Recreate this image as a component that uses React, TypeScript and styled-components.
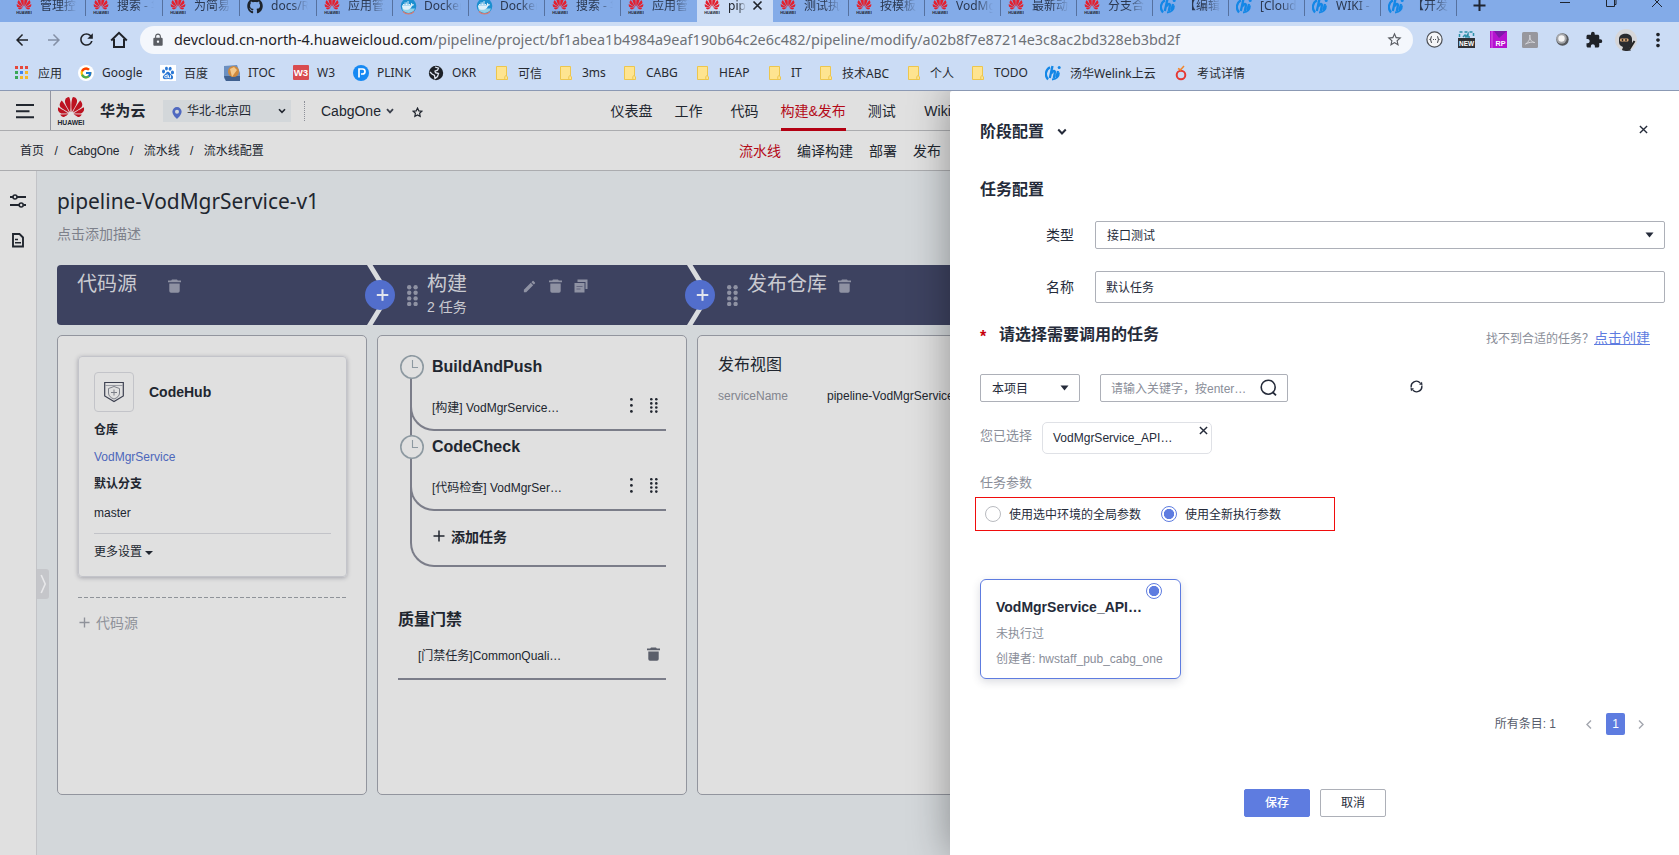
import React from "react";
import styled, { createGlobalStyle } from "styled-components";
import { SiHuawei, SiBaidu, SiDocker } from "react-icons/si";
import { FaGithub } from "react-icons/fa";
import { FcGoogle } from "react-icons/fc";
import { MdArrowBack, MdArrowForward, MdRefresh, MdLock, MdStarBorder, MdExtension, MdMoreVert, MdEdit } from "react-icons/md";

const UI = `"Liberation Sans", "Noto Sans CJK SC", sans-serif`;
const CHROME = `"Noto Sans", "Noto Sans CJK SC", sans-serif`;

const Global = createGlobalStyle`
  * { box-sizing: border-box; }
  html, body { margin: 0; padding: 0; overflow: hidden; }
  body { font-family: ${UI}; font-size: 12px; color: #21262f; }
  svg { display: block; flex: none; }
`;

const Window = styled.div`
  width: 1679px;
  height: 855px;
  display: flex;
  flex-direction: column;
  overflow: hidden;
`;

/* ---------- browser frame ---------- */

const TabStrip = styled.div`
  height: 22px;
  flex: none;
  display: flex;
  padding-left: 9px;
  background: #83abe8;
  overflow: hidden;
  font-family: ${CHROME};
  color: #2b3850;
`;

const Tab = styled.div<{ $w: number; $active?: boolean; $bare?: boolean }>`
  width: ${(p) => p.$w}px;
  flex: none;
  display: flex;
  height: ${(p) => (p.$active ? 22 : 16)}px;
  padding-left: 7px;
  background: ${(p) => (p.$active ? "#cbdcf5" : "transparent")};
  border-right: 1px solid ${(p) => (p.$active || p.$bare ? "transparent" : "#56719f")};
  color: ${(p) => (p.$active ? "#20242c" : "inherit")};
`;

const TabIcon = styled.div`
  width: 16px;
  height: 16px;
  flex: none;
  margin-top: -2px;
  margin-right: 8px;
`;

const TabText = styled.div<{ $w: number }>`
  width: ${(p) => p.$w}px;
  height: 18px;
  margin-top: -3px;
  line-height: 18px;
  overflow: hidden;
  white-space: nowrap;
  mask-image: linear-gradient(to right, #000 55%, transparent 100%);
`;

const WindowButtons = styled.div`
  display: flex;
  flex: 1;
`;

const Toolbar = styled.div`
  height: 37px;
  flex: none;
  display: flex;
  align-items: center;
  background: #cbdcf5;
  padding: 0 4px 3px 13px;
  color: #1f2228;
`;

const NavIcons = styled.div`
  width: 127px;
  display: flex;
  align-items: center;
  gap: 14px;
  flex: none;
  margin-left: -2px;
  padding: 1px 0 0 2px;
`;

const AddressBar = styled.div`
  width: 1273px;
  height: 28px;
  margin-top: 1px;
  display: flex;
  align-items: center;
  flex: none;
  margin-left: 2px;
  border-radius: 14px;
  background: #f4f7fc;
  padding: 0 10px 0 11px;
  color: #5a5d63;
`;

const Url = styled.div`
  flex: 1;
  margin-left: 9px;
  font: 14.4px/28px ${CHROME};
  color: #6d7177;
  white-space: nowrap;
  b { font-weight: 400; color: #1f2228; }
`;

const Extensions = styled.div`
  display: grid;
  grid-template-columns: repeat(8, 32px);
  align-items: center;
  justify-items: center;
  margin: 1px 0 0 5px;
`;

const Bookmarks = styled.div`
  height: 31px;
  flex: none;
  display: flex;
  padding: 0 0 4px 14px;
  background: #cbdcf5;
  font-family: ${CHROME};
  color: #272a31;
`;

const Bookmark = styled.div<{ $w: number }>`
  width: ${(p) => p.$w}px;
  flex: none;
  display: flex;
  align-items: center;
  gap: 8px;
  white-space: nowrap;
`;

/* ---------- site header ---------- */

const Site = styled.div`
  flex: 1;
  min-height: 0;
  position: relative;
  overflow: hidden;
  border-top: 1px solid #8b99b4;
  background: #e0e0e0;
  display: flex;
  flex-direction: column;
`;

const Header = styled.header`
  height: 40px;
  flex: none;
  display: flex;
  border-bottom: 1px solid #abacaf;
`;

const MenuButton = styled.div`
  width: 51px;
  height: 39px;
  border-right: 1px solid #9395a0;
  padding: 13px 0 0 16px;
`;

const Brand = styled.div`
  width: 112px;
  display: flex;
  align-items: center;
  padding-left: 6px;
  font-size: 15px;
  font-weight: 600;
  line-height: 36px;
`;

const BrandName = styled.span`
  margin-left: 15px;
  letter-spacing: 0.3px;
  padding-top: 1px;
`;

const Region = styled.div`
  width: 128px;
  height: 22px;
  margin-top: 9px;
  display: flex;
  align-items: center;
  padding: 0 5px 0 9px;
  background: #d3d7da;
  svg:first-child { margin: 4px 5px 0 0; }
  span { flex: 1; line-height: 22px; }
`;

const ProjectPick = styled.div`
  height: 20px;
  width: 298px;
  margin: 10px 0 0 13px;
  padding-left: 16px;
  border-left: 1px dotted #8d8f98;
  display: flex;
  align-items: center;
  font-size: 14px;
  svg { margin-left: 5px; }
  svg + svg { margin: 3px 0 0 18px; }
`;

const MainNav = styled.nav<{ $sub?: boolean }>`
  display: flex;
  font-size: 14px;
  gap: ${(p) => (p.$sub ? 16 : 22)}px;
  line-height: ${(p) => (p.$sub ? 40 : 41)}px;
`;

const NavItem = styled.a<{ $active?: boolean; $line?: boolean; $ml?: number }>`
  height: 40px;
  color: ${(p) => (p.$active ? "#b40a18" : "inherit")};
  margin-left: ${(p) => p.$ml ?? 0}px;
  border-bottom: ${(p) => (p.$line ? "3px solid #b30012" : "0")};
  white-space: nowrap;
`;

const SubHeader = styled.div`
  height: 40px;
  flex: none;
  display: flex;
  border-bottom: 1px solid #abacaf;
`;

const Crumbs = styled.div`
  width: 739px;
  padding-left: 20px;
  display: flex;
  gap: 10.4px;
  line-height: 40px;
  i { font-style: normal; }
`;

/* ---------- workspace ---------- */

const Work = styled.div`
  flex: 1;
  min-height: 0;
  display: flex;
`;

const Rail = styled.aside`
  width: 37px;
  flex: none;
  border-right: 1px solid #c2c3c7;
  padding: 22px 0 0 10px;
  display: flex;
  flex-direction: column;
  gap: 23px;
`;

const Canvas = styled.main`
  flex: 1;
  background: #d3d7da;
  display: flex;
  overflow: hidden;
`;

const RailHandle = styled.div`
  width: 12px;
  height: 30px;
  margin: 398px 8px 0 0;
  flex: none;
  background: #c5c6ca;
  border-radius: 0 3px 3px 0;
  padding: 5px 0 0 3px;
`;

const Board = styled.div`
  width: 1000px;
  flex: none;
  display: flex;
  flex-direction: column;
`;

const PipelineTitle = styled.h1`
  margin: 14px 0 0;
  font: 400 20.9px/32px ${CHROME};
`;

const Description = styled.div`
  margin-top: 6px;
  font-size: 14px;
  line-height: 22px;
  color: #7d808a;
`;

const StageBar = styled.div`
  display: flex;
  height: 60px;
  margin-top: 20px;
  flex: none;
  border-radius: 4px 0 0 4px;
  background: #3d4260;
  color: #cfd0d6;
`;

const Stage = styled.div<{ $w: number; $pl: number }>`
  width: ${(p) => p.$w}px;
  padding-left: ${(p) => p.$pl}px;
  flex: none;
  display: flex;
  color: #8f92a3;
`;

const DragHandle = styled.div`
  width: 20px;
  padding-top: 20px;
`;

const StageName = styled.div<{ $w: number }>`
  width: ${(p) => p.$w}px;
  color: #c9cad0;
  font-size: 20px;
  line-height: 39px;
  white-space: nowrap;
  small { display: block; font-size: 14px; line-height: 18px; margin-top: -6px; }
`;

const StageTools = styled.div`
  display: flex;
  padding-top: 14px;
  gap: 12px;
`;

const Columns = styled.div`
  display: flex;
  gap: 10px;
  margin-top: 10px;
`;

const Column = styled.section<{ $pl: number }>`
  width: 310px;
  height: 460px;
  flex: none;
  border: 1px solid #92959e;
  border-radius: 5px;
  background: #e0e0e0;
  padding: 20px 20px 0 ${(p) => p.$pl}px;
`;

const RepoCard = styled.div`
  width: 269px;
  height: 221px;
  border: 1px solid #c3c4ca;
  border-radius: 4px;
  box-shadow: 0 1px 4px rgba(60, 60, 80, 0.36);
  padding: 15px;
  display: flex;
  flex-direction: column;
`;

const RepoHead = styled.div`
  display: flex;
  align-items: center;
  gap: 15px;
  font-size: 14px;
  font-weight: 700;
`;

const RepoIcon = styled.div`
  width: 40px;
  height: 40px;
  border: 1px solid #c3c4c9;
  border-radius: 4px;
  padding: 8px 0 0 9px;
`;

const RepoLine = styled.div<{ $h: number; $bold?: boolean; $link?: boolean }>`
  line-height: ${(p) => p.$h}px;
  font-weight: ${(p) => (p.$bold ? 700 : 400)};
  color: ${(p) => (p.$link ? "#4d67bb" : "inherit")};
`;

const MoreSettings = styled.div`
  margin-top: 9px;
  border-top: 1px solid #c2c3c8;
  line-height: 36px;
  display: flex;
  align-items: center;
  gap: 3px;
`;

const AddSource = styled.div`
  width: 268px;
  margin-top: 20px;
  height: 40px;
  display: flex;
  align-items: center;
  gap: 6px;
  padding: 10px 0 0 1px;
  font-size: 14px;
  color: #8f929a;
  background: repeating-linear-gradient(to right, #8f9399 0 4px, transparent 4px 6px) top / 100% 1px no-repeat;
`;

const Tree = styled.div`
  width: 256px;
  height: 212px;
  margin-top: -1px;
  border: solid #7b7d89;
  border-width: 0 0 2px 2px;
  border-bottom-left-radius: 24px;
`;

const TreeNode = styled.div`
  height: 76px;
  margin: 0 0 4px -2px;
  border: solid #7b7d89;
  border-width: 0 0 2px 2px;
  border-bottom-left-radius: 24px;
`;

const TreeTitle = styled.div`
  display: flex;
  align-items: center;
  height: 24px;
  margin-left: -12px;
  gap: 8px;
  font-size: 16px;
  font-weight: 700;
`;

const TaskRow = styled.div`
  display: flex;
  height: 50px;
  line-height: 59px;
  padding-left: 20px;
  span { flex: 1; }
`;

const AddTask = styled.div`
  display: flex;
  align-items: center;
  gap: 6px;
  height: 50px;
  padding-left: 21px;
  margin-top: -4px;
  font-size: 14px;
  font-weight: 700;
`;

const GateTitle = styled.div`
  margin: 41px 0 0 -12px;
  font-size: 16px;
  font-weight: 600;
  line-height: 24px;
`;

const GateRow = styled.div`
  width: 268px;
  height: 48px;
  margin-left: -12px;
  border-bottom: 2px solid #7b7d89;
  display: flex;
  align-items: flex-start;
  padding: 15px 6px 0 20px;
  line-height: 19px;
  span { flex: 1; }
`;

const ViewTitle = styled.div`
  margin-top: -3px;
  font-size: 16px;
  line-height: 24px;
`;

const ViewRow = styled.div`
  display: flex;
  margin-top: 8px;
  line-height: 22px;
  white-space: nowrap;
  label { width: 109px; flex: none; color: #82858e; }
`;

/* ---------- drawer ---------- */

const Drawer = styled.aside`
  position: absolute;
  top: 0;
  right: 0;
  bottom: 0;
  width: 729px;
  padding: 0 14px 0 30px;
  background: #fff;
  border-radius: 2px 0 0 0;
  box-shadow: 0 0 40px rgba(0, 0, 0, 0.36);
  color: #252b3a;
  display: flex;
  flex-direction: column;
`;

const DrawerTitle = styled.div<{ $mt: number }>`
  display: flex;
  align-items: center;
  height: 24px;
  flex: none;
  margin-top: ${(p) => p.$mt}px;
  font-size: 16px;
  font-weight: 600;
  line-height: 24px;
  svg { margin-left: 13px; }
  svg + svg { margin: -5px 17px 0 auto; }
`;

const Field = styled.div<{ $mt: number; $h: number }>`
  display: flex;
  align-items: center;
  height: ${(p) => p.$h}px;
  flex: none;
  margin-top: ${(p) => p.$mt}px;
  label { width: 115px; padding: 0 0 2px 66px; font-size: 14px; }
`;

const Control = styled.div<{ $w: number; $pl?: number }>`
  width: ${(p) => p.$w}px;
  height: 100%;
  display: flex;
  align-items: center;
  justify-content: space-between;
  padding: 0 10px 1px ${(p) => p.$pl ?? 11}px;
  border: 1px solid #adb0b8;
  border-radius: 2px;
`;

const Placeholder = styled.span`
  color: #8a8e99;
  padding-bottom: 1px;
`;

const TaskHead = styled.div`
  display: flex;
  height: 24px;
  flex: none;
  margin-top: 20px;
  line-height: 24px;
  font-size: 16px;
  font-weight: 600;
  padding-right: 15px;
  i { width: 19px; font-style: normal; color: #c7000b; font-weight: 700; padding-top: 2px; }
`;

const CreateHint = styled.div`
  margin-left: auto;
  padding-top: 3px;
  font-size: 12px;
  font-weight: 400;
  color: #8a8e99;
  a { font-size: 14px; color: #5e7ce0; text-decoration: underline; }
`;

const Filters = styled.div`
  display: flex;
  align-items: center;
  height: 28px;
  flex: none;
  margin-top: 27px;
  > * + * { margin-left: 20px; }
  > svg { margin: -3px 0 0 122px; }
`;

const Selected = styled.div`
  display: flex;
  height: 32px;
  flex: none;
  margin-top: 20px;
  gap: 10px;
  font-size: 13px;
  line-height: 28px;
  color: #8a8e99;
`;

const Chip = styled.div`
  width: 170px;
  border: 1px solid #dfe1e6;
  border-radius: 5px;
  display: flex;
  justify-content: space-between;
  padding: 0 3px 0 10px;
  font-size: 12px;
  line-height: 30px;
  color: #252b3a;
  svg { margin-top: 3px; }
`;

const ParamLabel = styled.div`
  margin-top: 19px;
  font-size: 13px;
  line-height: 20px;
  color: #8a8e99;
`;

const RadioGroup = styled.div`
  width: 360px;
  height: 34px;
  flex: none;
  margin: 4px 0 0 -5px;
  border: 1px solid #f00c0c;
  display: flex;
  align-items: center;
  padding: 0 0 1px 9px;
  gap: 8px;
  span { margin-right: 12px; padding-bottom: 1px; }
`;

const Radio = styled.div<{ $on?: boolean }>`
  width: 16px;
  height: 16px;
  flex: none;
  border-radius: 50%;
  border: 1px solid ${(p) => (p.$on ? "#5e7ce0" : "#b9bbc0")};
  background: ${(p) => (p.$on ? "radial-gradient(circle, #5e7ce0 4.8px, #fff 5.4px)" : "#fff")};
`;

const TaskCard = styled.div`
  width: 201px;
  height: 100px;
  flex: none;
  margin-top: 48px;
  border: 1px solid #5e7ce0;
  border-radius: 6px;
  box-shadow: 0 3px 8px rgba(40, 50, 80, 0.17);
  padding: 3px 15px 0;
  line-height: 25px;
  color: #8a8e99;
  ${Radio} { margin-left: 150px; }
  strong { display: block; font-size: 14px; line-height: 16px; color: #252b3a; margin-bottom: 7px; }
`;

const Pager = styled.div`
  display: flex;
  align-items: center;
  height: 22px;
  flex: none;
  margin-top: 34px;
  padding-right: 21px;
  justify-content: flex-end;
  color: #575d6c;
  svg { margin: 0 0 0 13px; }
  span { padding-bottom: 4px; }
`;

const PageNo = styled.div`
  width: 19px;
  height: 22px;
  margin-left: 14px;
  border-radius: 2px;
  background: #5e7ce0;
  color: #fff;
  line-height: 22px;
  text-align: center;
`;

const Actions = styled.div`
  display: flex;
  gap: 10px;
  margin: 54px 0 0 264px;
`;

const Button = styled.div<{ $primary?: boolean }>`
  width: 66px;
  height: 28px;
  border: 1px solid ${(p) => (p.$primary ? "#5e7ce0" : "#adb0b8")};
  border-radius: 2px;
  background: ${(p) => (p.$primary ? "#5e7ce0" : "#fff")};
  color: ${(p) => (p.$primary ? "#fff" : "#252b3a")};
  font-weight: ${(p) => (p.$primary ? 500 : 400)};
  line-height: 26px;
  text-align: center;
`;

/* ---------- drawings ---------- */

const HuaweiMark = ({ size = 16, color = "#e3202e" }: { size?: number; color?: string }) => (
  <svg width={size} height={size} viewBox="0 0 28 28">
    <g transform="translate(0.8 -3.2) scale(1.1)"><SiHuawei size={24} color={color} /></g>
    <text x="14" y="27.5" textAnchor="middle" fontSize="6.6" fontWeight="700" fontFamily={UI} textLength="27" lengthAdjust="spacingAndGlyphs" fill="#21262f">HUAWEI</text>
  </svg>
);

const HiMark = () => (
  <svg width="17" height="16" viewBox="0 0 17 16">
    <path d="M5 2.2C0.500 4.500-.5 10.500 3 14.500" fill="none" stroke="#1487e6" strokeWidth="2.200" />
    <path d="M14 7.500c0 4-3 6.500-7 7" fill="none" stroke="#1487e6" strokeWidth="1.800" />
    <path d="M7.500 1L4.800 13M6.300 8.500C7.500 5.500 10.500 5 9.800 8L8.800 13M13 6l-1.600 6" fill="none" stroke="#1487e6" strokeWidth="2.300" />
    <circle cx="14.200" cy="2.400" r="1.500" fill="#1487e6" />
  </svg>
);

const DockerMark = () => (
  <svg width="17" height="17" viewBox="0 0 17 17">
    <circle cx="8.500" cy="8" r="7.800" fill="#1b8fd0" />
    <path d="M2 10.500A7 7 0 0 0 15 10.500z" fill="#8fd0e8" />
    <g transform="translate(2 1.500)"><SiDocker size={12} color="#dff1fa" /></g>
    <path d="M3 13.500a7.600 7.600 0 0 0 11 0" fill="none" stroke="#d37a72" strokeWidth="1.200" />
  </svg>
);

const Folder = () => (
  <svg width="16" height="16" viewBox="0 0 16 16">
    <path d="M2.500 1.500h10v9.500l1 1v2.500h-11z" fill="#fee490" stroke="#edc64d" />
    <path d="M10.800 14.500v-3l1.200-1" fill="none" stroke="#edc64d" />
  </svg>
);

const Apps = () => (
  <svg width="16" height="16" viewBox="0 0 16 16">
    {["#e5483b", "#e5483b", "#e5483b", "#3aa757", "#3f82ee", "#f5b829", "#3aa757", "#f5b829", "#f5b829"].map((c, i) => (
      <rect key={i} x={1 + (i % 3) * 5} y={1 + Math.floor(i / 3) * 5} width="3" height="3" fill={c} />
    ))}
  </svg>
);

const Chevron = ({ w = 8, color = "#21262f", sw = 2 }) => (
  <svg width={w} height={w * 0.75} viewBox="0 0 8 6"><path d="M1 1.2l3 3.2 3-3.2" fill="none" stroke={color} strokeWidth={sw} /></svg>
);

const Caret = () => (
  <svg width="9" height="6" viewBox="0 0 9 6"><path d="M0.5 0.5h8l-4 5z" fill="#252b3a" /></svg>
);

const Cross = ({ s = 9, sw = 1.5, color = "#252b3a" }) => (
  <svg width={s} height={s} viewBox="0 0 10 10"><path d="M1 1l8 8M9 1l-8 8" stroke={color} strokeWidth={sw} /></svg>
);

const Plus = ({ s = 12, sw = 1.5, color = "#21262f" }) => (
  <svg width={s} height={s} viewBox="0 0 12 12"><path d="M6 0.5v11M0.5 6h11" stroke={color} strokeWidth={sw} /></svg>
);

const Trash = ({ color = "#8f92a3" }) => (
  <svg width="13" height="14" viewBox="0 0 13 14"><path d="M4 0.5h5l0.8 1H13v1.7H0V1.500h3.200zM1.300 4.400h10.400v7.600a1.700 1.700 0 0 1-1.700 1.700H3a1.700 1.700 0 0 1-1.700-1.700z" fill={color} /></svg>
);

const Copy = () => (
  <svg width="14" height="14" viewBox="0 0 14 14"><path d="M3.500 0.500h10v9.500h-2V3h-8z" fill="#8f92a3" /><path d="M0.500 4h10v9.500h-10z" fill="#8f92a3" /><path d="M2.500 7.500h6M2.500 10h4" fill="none" stroke="#5d617a" strokeWidth="0.900" /></svg>
);

const Dots = ({ rows, cols, gx, gy, r, color }: { rows: number; cols: number; gx: number; gy: number; r: number; color: string }) => (
  <svg width={(cols - 1) * gx + r * 2} height={(rows - 1) * gy + r * 2}>
    {Array.from({ length: rows * cols }, (_, i) => (
      <circle key={i} cx={r + (i % cols) * gx} cy={r + Math.floor(i / cols) * gy} r={r} fill={color} />
    ))}
  </svg>
);

const Joint = () => (
  <svg width="32" height="60" viewBox="0 0 32 60">
    <path d="M3 0h5.600L27 30 8.600 60H3L21.400 30z" fill="#d9dcdf" />
    <circle cx="16" cy="30" r="15" fill="#526ecc" />
    <path d="M18.500 24.300v11.500M12.800 30h11.500" stroke="#e3e6ee" strokeWidth="2" />
  </svg>
);

const Clock = () => (
  <svg width="24" height="24" viewBox="0 0 24 24">
    <circle cx="12" cy="12" r="11.200" fill="#e0e0e0" stroke="#8d99a1" strokeWidth="1.600" />
    <path d="M12.500 5v7.500H18" fill="none" stroke="#8d99a1" strokeWidth="1.100" />
  </svg>
);

/* ---------- data ---------- */

const icons: Record<string, React.ReactNode> = {
  hw: <HuaweiMark />,
  hi: <HiMark />,
  docker: <DockerMark />,
  gh: <FaGithub size={16} color="#1d232c" />,
};

const tabs: [string, string][] = [
  ["hw", "管理控制"], ["hw", "搜索 - 华"], ["hw", "为简易"], ["gh", "docs/RE"], ["hw", "应用管理"], ["docker", "Docker"], ["docker", "Docker"],
  ["hw", "搜索 - 华"], ["hw", "应用管理"], ["hw", "pipeline"], ["hw", "测试执行"], ["hw", "按模板"], ["hw", "VodMgr"], ["hw", "最新动态"],
  ["hw", "分支合"], ["hi", "【编辑"], ["hi", "[Cloud"], ["hi", "WIKI - 2"], ["hi", "【开发"],
];

const bookmarks: [React.ReactNode, string, number][] = [
  [<Apps />, "应用", 64],
  [<svg width="16" height="16" viewBox="0 0 16 16"><circle cx="8" cy="8" r="8" fill="#fff" /><g transform="translate(1.500 1.500)"><FcGoogle size={13} /></g></svg>, "Google", 82],
  [<svg width="16" height="16" viewBox="0 0 16 16"><rect width="16" height="16" fill="#fff" /><g transform="translate(1.500 1.500)"><SiBaidu size={13} color="#2a77d4" /></g></svg>, "百度", 64],
  [<svg width="16" height="16" viewBox="0 0 16 16"><path d="M0 1l13-1 3 8v8H2L0 13z" fill="#6b8fc0" /><path d="M0 11h16v5H2z" fill="#3f608f" /><circle cx="9.500" cy="6.500" r="5.500" fill="#cf8a3e" /><path d="M6 4l4-2 3 3-3 4-2 3z" fill="#f3c88b" /></svg>, "ITOC", 69],
  [<svg width="16" height="15" viewBox="0 0 16 15"><rect width="16" height="15" rx="1" fill="#d94c50" /><text x="8" y="11" textAnchor="middle" fontSize="9.500" fontWeight="700" fontFamily={UI} fill="#fff" textLength="14.500" lengthAdjust="spacingAndGlyphs">W3</text></svg>, "W3", 60],
  [<svg width="16" height="16" viewBox="0 0 16 16"><circle cx="8" cy="8" r="8" fill="#1689f3" /><path d="M6 12.500V4h3.500a2.400 2.400 0 0 1 0 5H8" fill="none" stroke="#fff" strokeWidth="1.700" /></svg>, "PLINK", 75],
  [<svg width="16" height="16" viewBox="0 0 16 16"><circle cx="8" cy="8" r="7.200" fill="#1d2127" /><path d="M7 2l3.500 1.200-1 2-2.500 1 .5 1.500 3 .8-1 3-2.500 2-.5-3-2.500-1.500L2 7" fill="none" stroke="#dfe6f2" strokeWidth="1.300" /></svg>, "OKR", 66],
  [<Folder />, "可信", 64],
  [<Folder />, "3ms", 64],
  [<Folder />, "CABG", 73],
  [<Folder />, "HEAP", 72],
  [<Folder />, "IT", 51],
  [<Folder />, "技术ABC", 88],
  [<Folder />, "个人", 64],
  [<Folder />, "TODO", 75],
  [<HiMark />, "汤华Welink上云", 128],
  [<svg width="16" height="18" viewBox="0 0 16 18"><circle cx="8" cy="11" r="4.300" fill="none" stroke="#e53935" strokeWidth="2" /><path d="M5 4.500l3 1.500M7 6.500l4-4.500" stroke="#f2852b" strokeWidth="1.500" /></svg>, "考试详情", 90],
];

const DotsWrap = styled.div`
  display: flex;
  gap: 17px;
  padding: 19px 8.5px 0 0;
`;

const TaskDots = () => (
  <DotsWrap>
    <Dots rows={3} cols={1} gx={0} gy={6} r={1.4} color="#21262f" />
    <Dots rows={4} cols={2} gx={5} gy={4.1} r={1.3} color="#21262f" />
  </DotsWrap>
);

const TreeTask = ({ title, text }: { title: string; text: string }) => (
  <TreeNode>
    <TreeTitle><Clock />{title}</TreeTitle>
    <TaskRow>
      <span>{text}</span>
      <TaskDots />
    </TaskRow>
  </TreeNode>
);

export default function App() {
  return (
    <Window>
      <Global />
      <TabStrip>
        {tabs.map(([icon, text], i) => (
          <Tab key={i} $w={i < 4 ? 77 : 76} $active={i === 9} $bare={i === 8}>
            <TabIcon>{icons[icon]}</TabIcon>
            <TabText $w={i === 9 ? 18 : 37}>{text}</TabText>
            {i === 9 && <svg width="17" height="11" viewBox="-6 0 17 11"><path d="M1.500 1.500l8 8M9.500 1.500l-8 8" stroke="#20242c" strokeWidth="1.700" /></svg>}
          </Tab>
        ))}
        <WindowButtons>
          <svg width="220" height="20" viewBox="0 0 220 20">
            <path d="M22.500 0v11M16.500 5.500h12" stroke="#1f2530" strokeWidth="2" />
            <path d="M103 2.500h10M149.500 0v6.500h8V0M157 4.500h2V0M195 -3l10 10M205 -3l-10 10" fill="none" stroke="#1f2530" />
          </svg>
        </WindowButtons>
      </TabStrip>
      <Toolbar>
        <NavIcons>
          <MdArrowBack size={18} /><MdArrowForward size={18} color="#8490a6" /><MdRefresh size={19} />
          <svg width="18" height="18" viewBox="0 0 18 18"><path d="M1.200 9.500L9 1.800l7.800 7.700M4 8v8h10V8" fill="none" stroke="#1f2228" strokeWidth="2" /></svg>
        </NavIcons>
        <AddressBar>
          <MdLock size={14} />
          <Url><b>devcloud.cn-north-4.huaweicloud.com</b>/pipeline/project/bf1abea1b4984a9eaf190b64c2e6c482/pipeline/modify/a02b8f7e87214e3c8ac2bd328eb3bd2f</Url>
          <MdStarBorder size={17} />
        </AddressBar>
        <Extensions>
          <svg width="17" height="17" viewBox="0 0 17 17"><circle cx="8.500" cy="8.500" r="7.600" fill="#f4f5f7" stroke="#4c4f55" strokeWidth="1.200" /><path d="M6 5.500c-1.500 0-.5 2.500-1.800 3C5.500 9 4.500 11.500 6 11.500M11 5.500c1.500 0 .5 2.500 1.800 3-1.300.5-.3 3-1.800 3" fill="none" stroke="#4c4f55" strokeWidth="1.100" /><path d="M7 8.500h1M9 8.500h1" stroke="#4c4f55" /></svg>
          <svg width="17" height="17" viewBox="0 0 17 17"><path d="M1.500 6V1h14v5" fill="none" stroke="#2b8fa8" strokeWidth="1.500" strokeDasharray="3 2" /><path d="M5 6l2-2 1 2 2-3v3h2" stroke="#2b8fa8" fill="none" strokeWidth="1.500" /><rect y="7" width="17" height="10" fill="#2f3136" /><text x="8.500" y="15" textAnchor="middle" fontSize="7.500" fontWeight="700" fontFamily={UI} fill="#fff" textLength="15" lengthAdjust="spacingAndGlyphs">NEW</text></svg>
          <svg width="17" height="17" viewBox="0 0 17 17"><rect width="17" height="17" fill="#b512cf" /><path d="M4 0h13L9 7z" fill="#7d1aa8" /><path d="M2 0v17" stroke="#e27af0" strokeWidth="0.800" /><text x="10.500" y="15" textAnchor="middle" fontSize="8" fontWeight="700" fontFamily={UI} fill="#fff" textLength="10" lengthAdjust="spacingAndGlyphs">RP</text></svg>
          <svg width="16" height="16" viewBox="0 0 16 16"><rect width="16" height="16" rx="1.500" fill="#97979d" /><path d="M3.500 12c3-2 5-5 4.300-9-.5 4 2 7.500 5 7.500-3-1-6 0-9.300 1.500z" fill="none" stroke="#d5d6db" /></svg>
          <svg width="15" height="15" viewBox="0 0 15 15"><circle cx="7.500" cy="7.500" r="6.200" fill="#55585c" /><circle cx="6.500" cy="6.500" r="5.200" fill="#a4a6aa" /><circle cx="6.500" cy="6.500" r="3.200" fill="#f4f4f4" /></svg>
          <MdExtension size={18} />
          <svg width="22" height="22" viewBox="0 0 22 22"><circle cx="11" cy="11" r="11" fill="#d6d6d9" /><path d="M4 10c0-7 13-7 13 0v4c0 3-2 4-3 5l2 2.500c-3 .8-7 .5-9-.5l1-3c-3-1-4-3-4-5z" fill="#292a2e" /><rect x="5" y="9.500" width="8.500" height="3" rx="1" fill="#dba675" /><circle cx="7.500" cy="11" r="0.900" fill="#222" /><circle cx="11" cy="11" r="0.900" fill="#222" /><path d="M19.500 12l-5 8" stroke="#222" strokeWidth="2" /></svg>
          <MdMoreVert size={22} />
        </Extensions>
      </Toolbar>
      <Bookmarks>
        {bookmarks.map(([icon, text, w]) => (
          <Bookmark key={text} $w={w}>{icon}{text}</Bookmark>
        ))}
      </Bookmarks>

      <Site>
        <Header>
          <MenuButton>
            <svg width="19" height="15" viewBox="0 0 19 15"><path d="M0 1h18M0 7.500h13.500M0 13.500h18" transform="scale(1 .98)" stroke="#21262f" strokeWidth="2" /></svg>
          </MenuButton>
          <Brand>
            <HuaweiMark size={28} color="#bd1220" />
            <BrandName>华为云</BrandName>
          </Brand>
          <Region>
            <svg width="10" height="12" viewBox="0 0 10 12"><path fillRule="evenodd" d="M5 0a4.600 4.600 0 0 1 4.600 4.700C9.600 8 5 12 5 12S.4 8 .4 4.700A4.600 4.600 0 0 1 5 0zm0 2.800a2 2 0 1 0 0 4 2 2 0 0 0 0-4z" fill="#5069c0" /></svg>
            <span>华北-北京四</span>
            <Chevron w={8} sw={1.6} />
          </Region>
          <ProjectPick>
            CabgOne
            <Chevron w={8} sw={1.8} color="#3b404c" />
            <svg width="11" height="11" viewBox="0 0 12 12"><path d="M6 1.200l1.400 3 3.300.4-2.400 2.300.6 3.300L6 8.600l-2.900 1.600.6-3.300L1.300 4.600l3.300-.4z" fill="none" stroke="#21262f" strokeWidth="1.300" /></svg>
          </ProjectPick>
          <MainNav>
            <NavItem $ml={8.5}>仪表盘</NavItem>
            <NavItem>工作</NavItem>
            <NavItem $ml={6}>代码</NavItem>
            <NavItem $active $line>构建&amp;发布</NavItem>
            <NavItem>测试</NavItem>
            <NavItem $ml={6.5}>Wiki</NavItem>
          </MainNav>
        </Header>
        <SubHeader>
          <Crumbs>首页<i>/</i>CabgOne<i>/</i>流水线<i>/</i>流水线配置</Crumbs>
          <MainNav $sub>
            <NavItem $active>流水线</NavItem>
            <NavItem>编译构建</NavItem>
            <NavItem>部署</NavItem>
            <NavItem>发布</NavItem>
          </MainNav>
        </SubHeader>
        <Work>
          <Rail>
            <svg width="17" height="16" viewBox="0 0 17 16"><path d="M0 4h3M7 4h9M0 12h9M13.500 12h2.500" stroke="#21262f" strokeWidth="2" /><circle cx="5" cy="4" r="2" fill="none" stroke="#21262f" strokeWidth="1.600" /><circle cx="11.200" cy="12" r="2" fill="none" stroke="#21262f" strokeWidth="1.600" /></svg>
            <svg width="16" height="16" viewBox="0 0 16 16"><path d="M3 2h6.500l3.500 3.500V14.500H3z" fill="none" stroke="#21262f" strokeWidth="1.900" /><path d="M5 7.500h3M5 10.800h6" stroke="#21262f" strokeWidth="1.500" /></svg>
          </Rail>
          <Canvas>
            <RailHandle><svg width="7" height="20" viewBox="0 0 7 20"><path d="M1.200 1l4 9-4 9" fill="none" stroke="#e8e8ea" strokeWidth="1.600" /></svg></RailHandle>
            <Board>
              <PipelineTitle>pipeline-VodMgrService-v1</PipelineTitle>
              <Description>点击添加描述</Description>
              <StageBar>
                <Stage $w={307} $pl={20}>
                  <StageName $w={91}>代码源</StageName>
                  <StageTools><Trash /></StageTools>
                </Stage>
                <Joint />
                <Stage $w={288} $pl={11}>
                  <DragHandle><Dots rows={4} cols={2} gx={6.4} gy={5.6} r={2.2} color="#8f92a3" /></DragHandle>
                  <StageName $w={95}>构建<small>2 任务</small></StageName>
                  <StageTools><MdEdit size={15} /><Trash /><Copy /></StageTools>
                </Stage>
                <Joint />
                <Stage $w={288} $pl={11}>
                  <DragHandle><Dots rows={4} cols={2} gx={6.4} gy={5.6} r={2.2} color="#8f92a3" /></DragHandle>
                  <StageName $w={91}>发布仓库</StageName>
                  <StageTools><Trash /></StageTools>
                </Stage>
              </StageBar>
              <Columns>
                <Column $pl={20}>
                  <RepoCard>
                    <RepoHead>
                      <RepoIcon>
                        <svg width="20" height="22" viewBox="0 0 20 22"><path d="M0.700 1.500h18.600v13.500L10 20.500.700 15z" fill="none" stroke="#3c4050" strokeWidth="1.200" /><path d="M1 4.500h18" stroke="#9a9ca4" /><path d="M10 5.500l5.500 2v4.500c0 3-2.500 5-5.500 6-3-1-5.500-3-5.500-6V7.500zM10 8.500v6M7 11.500h6" fill="none" stroke="#7c7f88" /></svg>
                      </RepoIcon>
                      CodeHub
                    </RepoHead>
                    <RepoLine $h={36} $bold>仓库</RepoLine>
                    <RepoLine $h={18} $link>VodMgrService</RepoLine>
                    <RepoLine $h={36} $bold>默认分支</RepoLine>
                    <RepoLine $h={22}>master</RepoLine>
                    <MoreSettings>更多设置<svg width="8" height="6" viewBox="0 -2 8 6"><path d="M0 0h8L4 4z" fill="#21262f" /></svg></MoreSettings>
                  </RepoCard>
                  <AddSource><Plus s={11} color="#8f929a" />代码源</AddSource>
                </Column>
                <Column $pl={32}>
                  <Tree>
                    <TreeTask title="BuildAndPush" text="[构建] VodMgrService…" />
                    <TreeTask title="CodeCheck" text="[代码检查] VodMgrSer…" />
                    <AddTask><Plus />添加任务</AddTask>
                  </Tree>
                  <GateTitle>质量门禁</GateTitle>
                  <GateRow><span>[门禁任务]CommonQuali…</span><Trash color="#5b5f6b" /></GateRow>
                </Column>
                <Column $pl={20}>
                  <ViewTitle>发布视图</ViewTitle>
                  <ViewRow><label>serviceName</label>pipeline-VodMgrService-v1</ViewRow>
                </Column>
              </Columns>
            </Board>
          </Canvas>
        </Work>

        <Drawer>
          <DrawerTitle $mt={29}>阶段配置<Chevron w={10} color="#252b3a" sw={1.6} /><Cross s={9} /></DrawerTitle>
          <DrawerTitle $mt={34}>任务配置</DrawerTitle>
          <Field $mt={19} $h={28}><label>类型</label><Control $w={570}>接口测试<Caret /></Control></Field>
          <Field $mt={22} $h={32}><label>名称</label><Control $w={570} $pl={10}>默认任务</Control></Field>
          <TaskHead><i>*</i>请选择需要调用的任务<CreateHint>找不到合适的任务？<a>点击创建</a></CreateHint></TaskHead>
          <Filters>
            <Control $w={100}>本项目<Caret /></Control>
            <Control $w={188} $pl={10}>
              <Placeholder>请输入关键字，按enter…</Placeholder>
              <svg width="19" height="17" viewBox="0 0 19 17"><circle cx="10.200" cy="8.200" r="7" fill="none" stroke="#252b3a" strokeWidth="1.600" /><path d="M14.500 13l3.500 3.300" stroke="#252b3a" strokeWidth="1.800" /></svg>
            </Control>
            <svg width="13" height="13" viewBox="0 0 13 13"><path d="M1.300 7.500A5.200 5.200 0 0 1 10.200 2.900M11.700 5.500A5.200 5.200 0 0 1 2.800 10.100" fill="none" stroke="#252b3a" strokeWidth="1.400" /><path d="M9 4.500l3.500.5-.5-3.300zM4 8.500L.5 8l.5 3.300z" fill="#252b3a" /></svg>
          </Filters>
          <Selected>您已选择<Chip>VodMgrService_API…<Cross s={9} sw={1.600} /></Chip></Selected>
          <ParamLabel>任务参数</ParamLabel>
          <RadioGroup>
            <Radio /><span>使用选中环境的全局参数</span>
            <Radio $on /><span>使用全新执行参数</span>
          </RadioGroup>
          <TaskCard>
            <Radio $on />
            <strong>VodMgrService_API…</strong>
            <div>未执行过</div>
            <div>创建者: hwstaff_pub_cabg_one</div>
          </TaskCard>
          <Pager>
            <span>所有条目: 1</span>
            <svg width="23" height="9" viewBox="-17 0 23 9"><path d="M5 0.500l-4 4 4 4" fill="none" stroke="#a3a6ae" strokeWidth="1.400" /></svg>
            <PageNo>1</PageNo>
            <svg width="6" height="9" viewBox="0 0 6 9"><path d="M1 0.500l4 4-4 4" fill="none" stroke="#a3a6ae" strokeWidth="1.400" /></svg>
          </Pager>
          <Actions>
            <Button $primary>保存</Button>
            <Button>取消</Button>
          </Actions>
        </Drawer>
      </Site>
    </Window>
  );
}
